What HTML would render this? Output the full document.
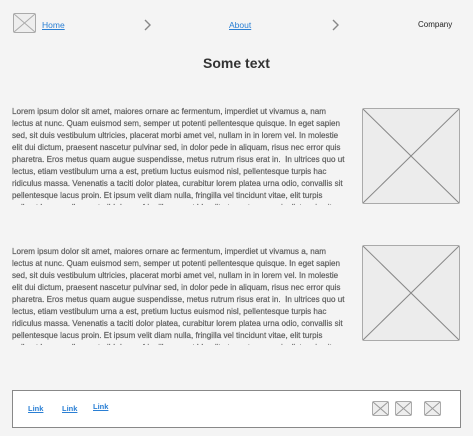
<!DOCTYPE html>
<html><head><style>
body{margin:0;width:473px;height:436px;background:#f4f4f4;font-family:"Liberation Sans",sans-serif;position:relative;overflow:hidden}
.a{position:absolute}
.link{color:#2a7fd4;text-decoration:underline;font-size:8.5px}
.txt{position:absolute;left:12px;width:345px;height:99px;overflow:hidden;font-size:8.1px;line-height:12px;color:#5f5f5f;white-space:nowrap;-webkit-text-stroke:0.2px #5f5f5f}
.img{position:absolute;left:362px;width:96px;height:94px;border:1.5px solid #aaa;border-radius:2px;background:#ececec}
.foot{position:absolute;left:12px;top:390px;width:447px;height:36px;background:#fff;border:1px solid #888}
.ic{position:absolute;width:15px;height:13px;border:1.5px solid #aaa;border-radius:2px;background:#eee}
</style></head><body>
<div class="ic" style="left:13px;top:13px;width:21px;height:18px"><svg width="21" height="18"><path d="M0 0L21 18M21 0L0 18" stroke="#aaa" stroke-width="1"/></svg></div>
<span class="a link" style="left:42px;top:20px">Home</span>
<svg class="a" style="left:144px;top:19px" width="8" height="12"><path d="M1 1L6 6L1 11" stroke="#888" stroke-width="1.4" fill="none"/></svg>
<span class="a link" style="left:229px;top:20px">About</span>
<svg class="a" style="left:332px;top:19px" width="8" height="12"><path d="M1 1L6 6L1 11" stroke="#888" stroke-width="1.4" fill="none"/></svg>
<span class="a" style="left:418px;top:20px;font-size:8px;color:#222">Company</span>
<div class="a" style="left:0;width:473px;top:55px;text-align:center;font-size:14px;font-weight:bold;color:#333">Some text</div>

<div class="txt" style="top:106px">Lorem ipsum dolor sit amet, maiores ornare ac fermentum, imperdiet ut vivamus a, nam<br>lectus at nunc. Quam euismod sem, semper ut potenti pellentesque quisque. In eget sapien<br>sed, sit duis vestibulum ultricies, placerat morbi amet vel, nullam in in lorem vel. In molestie<br>elit dui dictum, praesent nascetur pulvinar sed, in dolor pede in aliquam, risus nec error quis<br>pharetra. Eros metus quam augue suspendisse, metus rutrum risus erat in.&nbsp; In ultrices quo ut<br>lectus, etiam vestibulum urna a est, pretium luctus euismod nisl, pellentesque turpis hac<br>ridiculus massa. Venenatis a taciti dolor platea, curabitur lorem platea urna odio, convallis sit<br>pellentesque lacus proin. Et ipsum velit diam nulla, fringilla vel tincidunt vitae, elit turpis<br>nulla et lorem nulla amet nibh lorem fringilla cras ut blandit at montes magnis dictum in vitae</div>
<div class="img" style="top:108px"><svg width="96" height="94"><path d="M0 0L96 94M96 0L0 94" stroke="#888" stroke-width="1"/></svg></div>

<div class="txt" style="top:246px">Lorem ipsum dolor sit amet, maiores ornare ac fermentum, imperdiet ut vivamus a, nam<br>lectus at nunc. Quam euismod sem, semper ut potenti pellentesque quisque. In eget sapien<br>sed, sit duis vestibulum ultricies, placerat morbi amet vel, nullam in in lorem vel. In molestie<br>elit dui dictum, praesent nascetur pulvinar sed, in dolor pede in aliquam, risus nec error quis<br>pharetra. Eros metus quam augue suspendisse, metus rutrum risus erat in.&nbsp; In ultrices quo ut<br>lectus, etiam vestibulum urna a est, pretium luctus euismod nisl, pellentesque turpis hac<br>ridiculus massa. Venenatis a taciti dolor platea, curabitur lorem platea urna odio, convallis sit<br>pellentesque lacus proin. Et ipsum velit diam nulla, fringilla vel tincidunt vitae, elit turpis<br>nulla et lorem nulla amet nibh lorem fringilla cras ut blandit at montes magnis dictum in vitae</div>
<div class="img" style="top:245px"><svg width="96" height="94"><path d="M0 0L96 94M96 0L0 94" stroke="#888" stroke-width="1"/></svg></div>

<div class="foot"></div>
<span class="a link" style="left:28px;top:404px;font-size:7.5px;font-weight:bold">Link</span>
<span class="a link" style="left:62px;top:404px;font-size:7.5px;font-weight:bold">Link</span>
<span class="a link" style="left:93px;top:402px;font-size:7.5px;font-weight:bold">Link</span>
<div class="ic" style="left:372px;top:401px"><svg width="15" height="13"><path d="M0 0L15 13M15 0L0 13" stroke="#999"/></svg></div>
<div class="ic" style="left:395px;top:401px"><svg width="15" height="13"><path d="M0 0L15 13M15 0L0 13" stroke="#999"/></svg></div>
<div class="ic" style="left:424px;top:401px"><svg width="15" height="13"><path d="M0 0L15 13M15 0L0 13" stroke="#999"/></svg></div>
</body></html>
